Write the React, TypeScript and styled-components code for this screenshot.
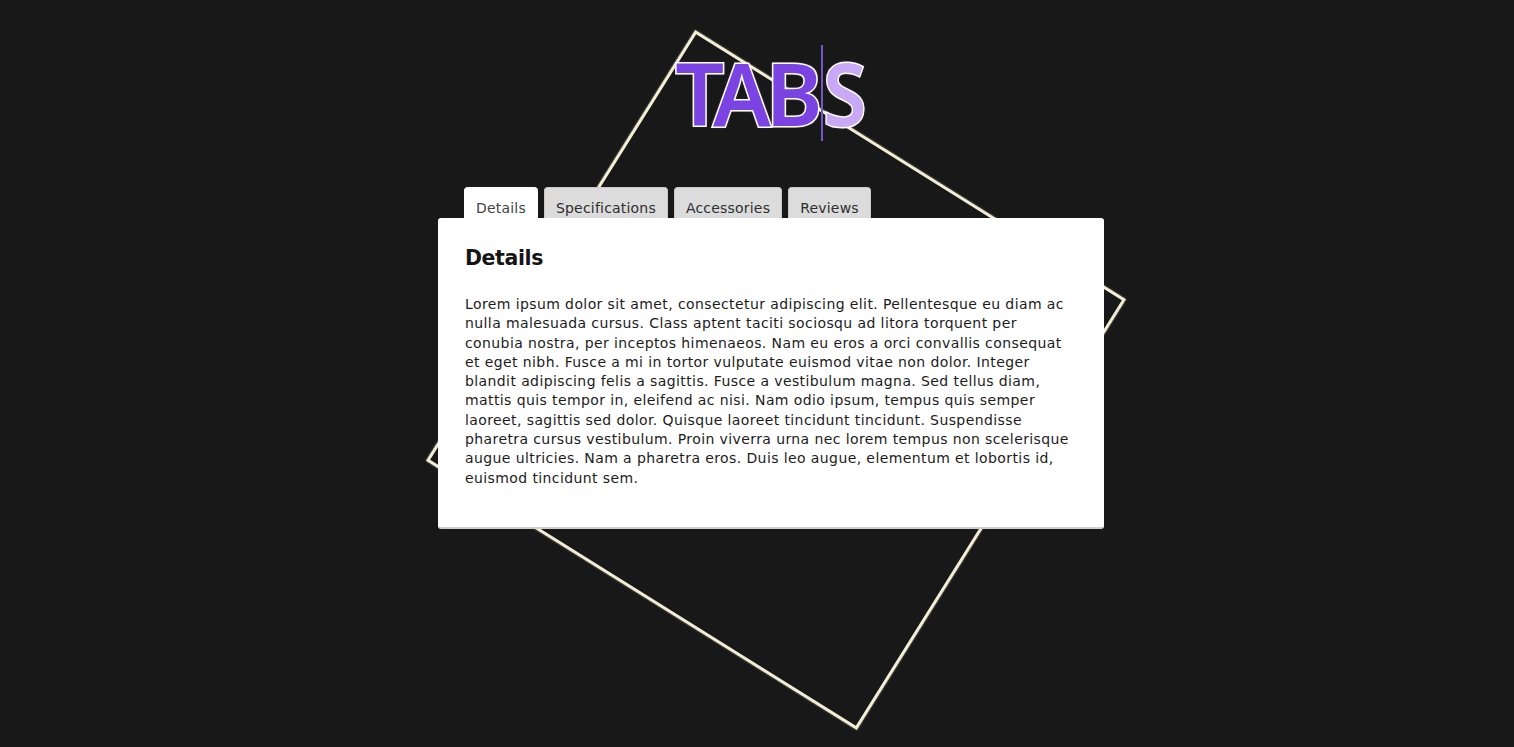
import React from "react";
import styled, { createGlobalStyle } from "styled-components";

const GlobalStyle = createGlobalStyle`
  html, body { margin: 0; padding: 0; background: #181818; }
  body { font-family: "DejaVu Sans", "Noto Sans", sans-serif; }
`;

const Page = styled.div`
  position: relative;
  min-height: 747px;
  background: #181818;
  overflow: hidden;
`;

const Square = styled.div`
  position: absolute;
  left: 776px;
  top: 380px;
  width: 502px;
  height: 502px;
  margin-left: -254px;
  margin-top: -254px;
  border: 3px solid #f3efd6;
  box-shadow: 0 0 2px rgba(243, 239, 214, 0.6);
  transform: rotate(32deg);
`;

const Column = styled.div`
  position: relative;
  width: 666px;
  margin-left: 438px;
  padding-top: 45px;
  display: flex;
  flex-direction: column;
`;

const Title = styled.h1`
  margin: 0 0 0 -2px;
  align-self: center;
  height: 96px;
  display: flex;
  align-items: center;
  font-family: "Noto Sans", sans-serif;
  font-weight: 600;
  font-size: 86px;
  letter-spacing: -5px;
  line-height: 1;
  -webkit-text-stroke: 3px #ffffff;
  paint-order: stroke fill;
  text-shadow: 0 0 3px rgba(255, 255, 255, 0.5);
`;

const Typed = styled.span`
  color: #7b44e2;
  border-right: 2px solid #7357c4;
  height: 96px;
  display: flex;
  align-items: center;
  padding-right: 3px;
`;

const Pending = styled.span`
  color: #c9a8f6;
  transform: scaleX(0.92);
  transform-origin: left center;
`;

const TabRow = styled.div`
  display: flex;
  gap: 6px;
  margin-top: 46px;
  padding-left: 26px;
`;

const Tab = styled.button<{ $active?: boolean }>`
  height: 31px;
  padding: 9px 11px 0;
  border: 1px solid ${(p) => (p.$active ? "#ffffff" : "#c9c9c9")};
  border-bottom: none;
  border-radius: 4px 4px 0 0;
  background: ${(p) => (p.$active ? "#ffffff" : "#dcdcdc")};
  color: ${(p) => (p.$active ? "#444" : "#2e2e2e")};
  font-family: "DejaVu Sans", sans-serif;
  font-size: 14px;
  line-height: 16px;
  letter-spacing: 0.2px;
  cursor: pointer;
`;

const Panel = styled.section`
  height: 311px;
  box-sizing: border-box;
  background: #ffffff;
  border-radius: 3px;
  border-bottom: 2px solid #cfcfcf;
  padding: 25px 27px 0;
  color: #1e1e1e;
`;

const Heading = styled.h2`
  margin: 0;
  font-family: "DejaVu Sans", sans-serif;
  font-weight: 700;
  font-size: 20.5px;
  line-height: 30px;
  letter-spacing: -0.4px;
  color: #151515;
`;

const Body = styled.p`
  margin: 22px 0 0;
  font-family: "DejaVu Sans", sans-serif;
  font-size: 14px;
  line-height: 19.3px;
  letter-spacing: 0.4px;
  color: #1c1c1c;
  width: 614px;
`;

const tabs = ["Details", "Specifications", "Accessories", "Reviews"];

export default function App() {
  return (
    <Page>
      <GlobalStyle />
      <Square />
      <Column>
        <Title>
          <Typed>TAB</Typed>
          <Pending>S</Pending>
        </Title>
        <TabRow>
          {tabs.map((t, i) => (
            <Tab key={t} $active={i === 0}>
              {t}
            </Tab>
          ))}
        </TabRow>
        <Panel>
          <Heading>Details</Heading>
          <Body>
            Lorem ipsum dolor sit amet, consectetur adipiscing elit. Pellentesque eu diam ac
            nulla malesuada cursus. Class aptent taciti sociosqu ad litora torquent per
            conubia nostra, per inceptos himenaeos. Nam eu eros a orci convallis consequat
            et eget nibh. Fusce a mi in tortor vulputate euismod vitae non dolor. Integer
            blandit adipiscing felis a sagittis. Fusce a vestibulum magna. Sed tellus diam,
            mattis quis tempor in, eleifend ac nisi. Nam odio ipsum, tempus quis semper
            laoreet, sagittis sed dolor. Quisque laoreet tincidunt tincidunt. Suspendisse
            pharetra cursus vestibulum. Proin viverra urna nec lorem tempus non scelerisque
            augue ultricies. Nam a pharetra eros. Duis leo augue, elementum et lobortis id,
            euismod tincidunt sem.
          </Body>
        </Panel>
      </Column>
    </Page>
  );
}
